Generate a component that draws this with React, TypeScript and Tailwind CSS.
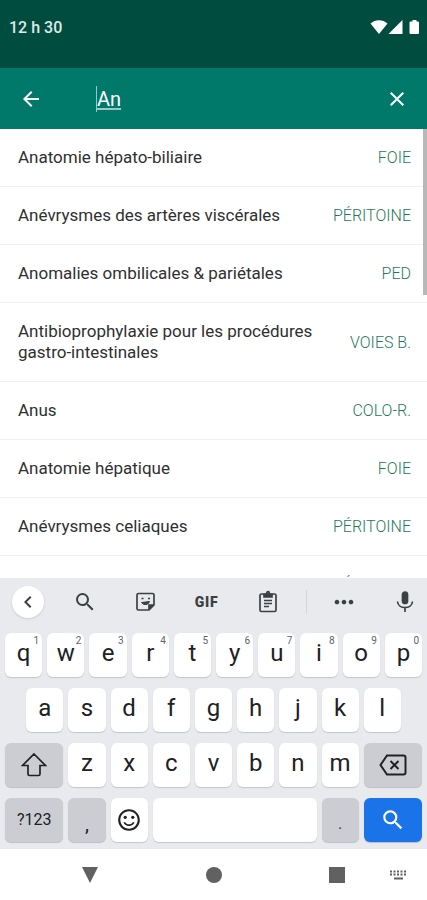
import { useState } from 'react';
import {
  MdArrowBack,
  MdChevronLeft,
  MdClose,
  MdMoreHoriz,
  MdOutlineSentimentSatisfied,
  MdSearch,
} from 'react-icons/md';

interface Result {
  title: string;
  category: string;
}

const results: Result[] = [
  { title: 'Anatomie hépato-biliaire', category: 'FOIE' },
  { title: 'Anévrysmes des artères viscérales', category: 'PÉRITOINE' },
  { title: 'Anomalies ombilicales & pariétales', category: 'PED' },
  { title: 'Antibioprophylaxie pour les procédures gastro-intestinales', category: 'VOIES B.' },
  { title: 'Anus', category: 'COLO-R.' },
  { title: 'Anatomie hépatique', category: 'FOIE' },
  { title: 'Anévrysmes celiaques', category: 'PÉRITOINE' },
  { title: '', category: 'PÉRITOINE' },
];

const topRow = ['q', 'w', 'e', 'r', 't', 'y', 'u', 'i', 'o', 'p'];
const middleRow = ['a', 's', 'd', 'f', 'g', 'h', 'j', 'k', 'l'];
const bottomRow = ['z', 'x', 'c', 'v', 'b', 'n', 'm'];

function StatusBar() {
  return (
    <div className="flex h-[68px] shrink-0 items-start justify-between bg-[#004d40] pt-[18px] pr-[7px] pl-[9px]">
      <span className="text-base leading-5 font-medium text-[#dfe9e7]">12 h 30</span>
      <svg viewBox="0 0 50 16" className="mt-px h-4 w-[50px] fill-white">
        <path d="M0.5 4.5C5 0 13 0 17.500 4.500L9 15Z" />
        <path d="M18.500 15L32.500 1V15Z" />
        <path d="M39.500 3.500Q39.500 2.500 40.500 2.500H42.500V1H46.500V2.500H48Q49 2.500 49 3.500V14Q49 15 48 15H40.500Q39.500 15 39.500 14Z" />
      </svg>
    </div>
  );
}

function SearchBar() {
  const [query, setQuery] = useState('An');

  return (
    <header className="flex h-[61px] shrink-0 items-center bg-[#00796b] pr-[18px] pl-[19px] text-white">
      <button aria-label="Retour">
        <MdArrowBack className="size-6" />
      </button>
      <input
        type="text"
        aria-label="Rechercher"
        value={query}
        onChange={(e) => setQuery(e.target.value)}
        className="ml-[53px] h-[26px] min-w-0 flex-1 border-l border-white/60 bg-transparent text-xl underline decoration-white/60 decoration-2 underline-offset-2 outline-none"
      />
      <button aria-label="Effacer">
        <MdClose className="size-6" />
      </button>
    </header>
  );
}

function ResultList() {
  return (
    <main className="relative min-h-0 flex-1 overflow-hidden bg-white">
      <ul>
        {results.map((result, index) => (
          <li
            key={index}
            className="flex min-h-[58px] items-center justify-between gap-4 border-b border-[#f1f1f1] py-[18px] pr-4 pl-[18px]"
          >
            <span className="text-[17px] leading-[21px] text-[#303030]">{result.title}</span>
            <span className="shrink-0 text-base leading-[21px] font-light text-[#1f7a5c]">
              {result.category}
            </span>
          </li>
        ))}
      </ul>
      {/* Scroll thumb */}
      <div className="absolute top-0 right-0 h-[166px] w-1 bg-[#b8b8b8]" />
    </main>
  );
}

function Toolbar() {
  return (
    <div className="flex h-12 items-center pr-[10px] pl-3 text-[#3c4043]">
      <button
        aria-label="Réduire"
        className="flex size-8 items-center justify-center rounded-full bg-white shadow-sm"
      >
        <MdChevronLeft className="size-6" />
      </button>
      <div className="ml-[10px] grid flex-1 grid-cols-4">
        <button aria-label="Recherche" className="flex justify-center">
          <MdSearch className="size-6" />
        </button>
        <button aria-label="Autocollants" className="flex justify-center">
          <svg viewBox="0 0 24 24" className="size-6 fill-none stroke-current stroke-[1.7]">
            <path d="M4.500 3.500H18.500Q20 3.500 20 5V15L15 20H4.500Q3 20 3 18.500V5Q3 3.500 4.500 3.500Z" />
            <path d="M15 20V15H20" className="fill-current" />
            <path d="M7.500 8.500H9.500M14 8.500H16" />
            <path d="M7.500 12.500Q9 15 12 14.500T15.500 11.500Z" className="fill-current stroke-1" />
          </svg>
        </button>
        <button className="text-center text-sm leading-6 font-black tracking-wider">GIF</button>
        <button aria-label="Presse-papiers" className="flex justify-center">
          <svg viewBox="0 0 24 24" className="size-6 fill-none stroke-current stroke-[1.7]">
            <rect x="4" y="4" width="16" height="17.500" rx="1.500" />
            <path d="M8 4.500H16V7H8Z" className="fill-current" />
            <circle cx="12" cy="3" r="1.300" />
            <path d="M8 10.500H16M8 13.500H16M8 16.500H13" />
          </svg>
        </button>
      </div>
      <div className="mx-2 h-6 w-px bg-[#d5d7da]" />
      <button aria-label="Plus" className="flex w-[58px] justify-center">
        <MdMoreHoriz className="size-7" />
      </button>
      <button aria-label="Dictée" className="ml-5">
        <svg viewBox="0 0 24 24" className="size-6 fill-none stroke-current stroke-[1.7]">
          <rect x="9.500" y="2" width="5" height="11.500" rx="2.500" className="fill-current" />
          <path d="M4.500 11.500C5 19.500 19 19.500 19.500 11.500" />
          <path d="M12 17.500V22" />
        </svg>
      </button>
    </div>
  );
}

function LetterKey({ letter, hint, className = '' }: { letter: string; hint?: number; className?: string }) {
  return (
    <button
      className={`relative col-span-2 flex h-11 items-center justify-center rounded-md bg-white pb-1 text-2xl leading-8 text-[#202124] shadow-[0_1px_1px_#c4c6ca] ${className}`}
    >
      {letter}
      {hint !== undefined && (
        <span className="absolute top-[2px] right-[3px] text-[10px] leading-3 text-[#5f6368]">{hint}</span>
      )}
    </button>
  );
}

function Keyboard() {
  return (
    <section className="shrink-0 bg-[#e8eaed] pb-[7px]">
      <Toolbar />
      <div className="mt-[7px] grid grid-cols-20 gap-x-[5px] gap-y-[11px] px-[5px] text-[#202124]">
        {topRow.map((letter, index) => (
          <LetterKey key={letter} letter={letter} hint={(index + 1) % 10} />
        ))}
        {middleRow.map((letter, index) => (
          <LetterKey key={letter} letter={letter} className={index === 0 ? 'col-start-2' : ''} />
        ))}

        <button
          aria-label="Majuscule"
          className="col-span-3 col-start-1 flex h-11 items-center justify-center rounded-md bg-[#cccdd2] shadow-[0_1px_1px_#bcbec2]"
        >
          <svg viewBox="0 0 26 26" className="size-[26px] fill-none stroke-current stroke-[1.7]">
            <path d="M13 2L24.500 13.500H19V22Q19 23.500 17.500 23.500H8.500Q7 23.500 7 22V13.500H1.500Z" />
          </svg>
        </button>
        {bottomRow.map((letter) => (
          <LetterKey key={letter} letter={letter} />
        ))}
        <button
          aria-label="Supprimer"
          className="col-span-3 flex h-11 items-center justify-center rounded-md bg-[#cccdd2] shadow-[0_1px_1px_#bcbec2]"
        >
          <svg viewBox="0 0 28 24" className="h-6 w-7 fill-none stroke-current stroke-2">
            <path d="M8 2.500H24.500Q26.500 2.500 26.500 4.500V19.500Q26.500 21.500 24.500 21.500H8L1.500 12Z" />
            <path d="M11.500 8L19.500 16M19.500 8L11.500 16" />
          </svg>
        </button>

        <button className="col-span-3 h-11 rounded-md bg-[#cccdd2] text-base shadow-[0_1px_1px_#bcbec2]">
          ?123
        </button>
        <button className="col-span-2 h-11 rounded-md bg-[#cccdd2] pt-2 text-xl shadow-[0_1px_1px_#bcbec2]">
          ,
        </button>
        <button
          aria-label="Émojis"
          className="col-span-2 flex h-11 items-center justify-center rounded-md bg-white shadow-[0_1px_1px_#c4c6ca]"
        >
          <MdOutlineSentimentSatisfied className="size-[26px]" />
        </button>
        <button
          aria-label="Espace"
          className="col-span-8 h-11 rounded-md bg-white shadow-[0_1px_1px_#c4c6ca]"
        />
        <button className="col-span-2 h-11 rounded-md bg-[#cccdd2] pt-2 text-base text-[#3c4043] shadow-[0_1px_1px_#bcbec2]">
          .
        </button>
        <button
          aria-label="Lancer la recherche"
          className="col-span-3 flex h-11 items-center justify-center rounded-md bg-[#1a73e8] text-white shadow-[0_1px_1px_#bcbec2]"
        >
          <MdSearch className="size-[26px]" />
        </button>
      </div>
    </section>
  );
}

function NavigationBar() {
  return (
    <nav className="flex h-[51px] shrink-0 items-center bg-white pr-5 pl-[82px] text-[#616161]">
      <div className="flex flex-1 justify-between">
        <button aria-label="Masquer le clavier">
          <svg viewBox="0 0 16 16" className="size-4 fill-current">
            <path d="M0 0H16L8 16Z" />
          </svg>
        </button>
        <button aria-label="Accueil" className="size-4 rounded-full bg-[#616161]" />
        <button aria-label="Applications récentes" className="size-4 bg-[#616161]" />
      </div>
      <button aria-label="Changer de clavier" className="ml-11">
        <svg viewBox="0 0 18 12" className="h-3 w-[18px] fill-none stroke-current">
          <path d="M1 2.500H18M1 5.500H18" strokeWidth="2" strokeDasharray="2 1.500" />
          <path d="M5 9.500H14" strokeWidth="2" />
        </svg>
      </button>
    </nav>
  );
}

export default function App() {
  return (
    <div className="flex h-screen flex-col overflow-hidden bg-white font-[Roboto,sans-serif]">
      <StatusBar />
      <SearchBar />
      <ResultList />
      <Keyboard />
      <NavigationBar />
    </div>
  );
}
